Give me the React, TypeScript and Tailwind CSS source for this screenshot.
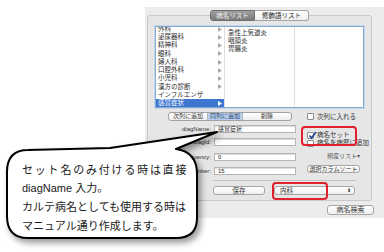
import React from "react";

const ui = "font-['Liberation_Sans','Noto_Sans_CJK_JP',sans-serif]";

const col1 = ["外科", "泌尿器科", "精神科", "眼科", "婦人科", "口腔外科", "小児科", "漢方の診断", "インフルエンザ", "感冒症状"];
const col2 = ["急性上気道炎", "咽頭炎", "胃腸炎"];

function Tri({ white }: { white?: boolean }) {
  return (
    <svg width="4" height="5" viewBox="0 0 4 5" className="shrink-0">
      <path d="M0 0 L4 2.5 L0 5 Z" fill={white ? "#ffffff" : "#a8a8a8"} />
    </svg>
  );
}

function Check({ checked }: { checked?: boolean }) {
  return (
    <div className="relative w-[7px] h-[7px] border border-[#8c8c8c] bg-white rounded-[1px] shrink-0">
      {checked && (
        <svg width="9" height="9" viewBox="0 0 9 9" className="absolute -top-[2px] -left-[0px]">
          <path d="M1.5 4.5 L3.5 7 L8 1" stroke="#1f3f8f" strokeWidth="1.6" fill="none" />
        </svg>
      )}
    </div>
  );
}

function Field({ value, label }: { value: string; label: string }) {
  return (
    <div className="flex items-center h-[8px]">
      <div className="w-[65px] text-right text-[6px] text-[#333] pr-[2px]">{label}</div>
      <div className="ml-[1px] w-[82px] h-[8px] bg-white border border-[#b5b5b5] shadow-[inset_0_1px_0_#ddd] text-[6px] leading-[7px] pl-[3px] text-[#222]">
        {value}
      </div>
    </div>
  );
}

export default function App() {
  return (
    <div className={`relative w-[384px] h-[252px] bg-white overflow-hidden ${ui}`}>
      <div className="pt-[7px]">
        <div className="ml-[145px] pt-[3px] w-[239px] h-[211px] bg-[#ececec]">
          <div className="ml-[2px] w-[225px]">
            {/* tabs */}
            <div className="relative z-10 flex justify-center h-[11px] text-[6.5px]">
              <div className="w-[45px] h-[11px] flex items-center justify-center rounded-l-[3px] border border-[#6e6e6e] bg-gradient-to-b from-[#a0a0a0] to-[#7a7a7a] text-[#f2f2f2]">
                病名リスト
              </div>
              <div className="w-[54px] h-[11px] flex items-center justify-center rounded-r-[3px] border border-l-0 border-[#a3a3a3] bg-gradient-to-b from-white to-[#efefef] text-[#222]">
                修飾語リスト
              </div>
            </div>
            {/* group box */}
            <div className="-mt-[6px] h-[186px] border border-[#c9c9c9] rounded-[3px] bg-[#e6e6e6]">
              {/* browser */}
              <div className="mt-[10px] ml-[7px] w-[209px] h-[82px] bg-white border border-[#86a9d2] shadow-[0_0_0_1px_#c4d6ec] flex overflow-hidden text-[6.5px] text-[#2a2a2a]">
                <div className="w-[69px] border-r border-[#dedede] -mt-[2px]">
                  {col1.map((c, i) => {
                    const sel = i === col1.length - 1;
                    return (
                      <div
                        key={c}
                        className={`h-[8.25px] flex items-center justify-between pl-[2px] pr-[2px] leading-none ${sel ? "bg-[#3d76cf] text-white" : ""}`}
                      >
                        <span>{c}</span>
                        {i !== 8 && <Tri white={sel} />}
                      </div>
                    );
                  })}
                </div>
                <div className="w-[70px] border-r border-[#dedede] pt-[2px]">
                  {col2.map((c) => (
                    <div key={c} className="h-[8px] flex items-center pl-[3px] leading-none">
                      {c}
                    </div>
                  ))}
                </div>
                <div className="flex-1" />
              </div>
              {/* segmented + checkbox */}
              <div className="mt-[4px] h-[9px] flex items-center">
                <div className="ml-[20px] flex h-[9px] w-[124px] border border-[#a2a2a2] rounded-[3px] bg-gradient-to-b from-white to-[#eeeeee] text-[6px] text-[#333] overflow-hidden">
                  <div className="w-[39px] flex items-center justify-center border-r border-[#b8b8b8]">次列に追加</div>
                  <div className="w-[35px] flex items-center justify-center border-r border-[#b8b8b8] bg-[#b7cfee] text-[#2a3f66]">同列に追加</div>
                  <div className="flex-1 flex items-center justify-center">削除</div>
                </div>
                <div className="ml-[15px] flex items-center gap-[3px] text-[6.5px] text-[#333]">
                  <Check />
                  <span>次列に入れる</span>
                </div>
              </div>
              {/* form */}
              <div className="flex">
                <div className="w-[150px]">
                  <div className="mt-[4px]">
                    <Field label="diagName:" value="感冒症状" />
                  </div>
                  <div className="mt-[5px]">
                    <Field label="diagId:" value="" />
                  </div>
                  <div className="mt-[7px]">
                    <Field label="frequency:" value="0" />
                  </div>
                  <div className="mt-[6px]">
                    <Field label="number:" value="15" />
                  </div>
                </div>
                <div className="ml-[9px] w-[53px] text-[6.5px] text-[#333]">
                  <div className="mt-[10px] h-[8px] flex items-center gap-[3px]">
                    <Check checked />
                    <span>病名セット</span>
                  </div>
                  <div className="h-[8px] flex items-center gap-[3px] whitespace-nowrap">
                    <Check />
                    <span>病名を病歴に追加</span>
                  </div>
                  <div className="mt-[5px] h-[8px] flex items-center justify-end text-[6px] text-[#555]">頻度リスト▾</div>
                  <div className="mt-[5px] h-[8px] flex items-center justify-center border border-[#a5a5a5] rounded-[3px] bg-gradient-to-b from-white to-[#efefef] text-[6px]">
                    選択カラムソート
                  </div>
                </div>
              </div>
              <div className="mt-[5px] ml-[65px] w-[143px] h-px bg-[#c4c4c4]" />
              <div className="mt-[5px] ml-[65px] flex h-[9px] text-[6.5px] text-[#333]">
                <div className="w-[52px] flex items-center justify-center border border-[#a5a5a5] rounded-[3px] bg-gradient-to-b from-white to-[#efefef]">保存</div>
                <div className="ml-[9px] w-[81px] flex items-center justify-between pl-[5px] pr-[3px] border border-[#a5a5a5] rounded-[3px] bg-gradient-to-b from-white to-[#efefef]">
                  <span>内科</span>
                  <span className="text-[5px] leading-none">⬍</span>
                </div>
              </div>
            </div>
          </div>
          <div className="mt-[4px] ml-[182px] w-[47px] h-[10px] flex items-center justify-center border border-[#a5a5a5] rounded-[3px] bg-gradient-to-b from-white to-[#efefef] text-[7px] text-[#333]">
            病名検索
          </div>
        </div>
      </div>

      {/* red annotations */}
      <div className="absolute left-[301px] top-[126px] w-[56px] h-[20px] border-2 border-[#e0202c] rounded-[4px]" />
      <div className="absolute left-[272px] top-[182px] w-[56px] h-[18px] border-2 border-[#e0202c] rounded-[4px]" />

      {/* speech bubble */}
      <svg
        width="384"
        height="252"
        viewBox="0 0 384 252"
        className="absolute left-0 top-0 drop-shadow-[3px_4px_3px_rgba(0,0,0,0.4)]"
      >
        <path
          d="M28 150 L110 148 L217 132 L176 149 Q197 152 197 174 L197 218 Q197 238 176 238 L28 238 Q7 238 7 216 L7 172 Q7 150 28 150 Z"
          fill="#ffffff"
          stroke="#000000"
          strokeWidth="2"
          strokeLinejoin="round"
        />
      </svg>
      <div className="absolute left-[22px] top-[160px] text-[11px] leading-[18.5px] text-[#1a1a1a] font-['Noto_Sans_CJK_JP',sans-serif] whitespace-nowrap">
        <div className="tracking-[1.8px]">セット名のみ付ける時は直接</div>
        <div className="font-['Liberation_Sans','Noto_Sans_CJK_JP',sans-serif]">diagName 入力。</div>
        <div>カルテ病名としても使用する時は</div>
        <div>マニュアル通り作成します。</div>
      </div>
    </div>
  );
}
